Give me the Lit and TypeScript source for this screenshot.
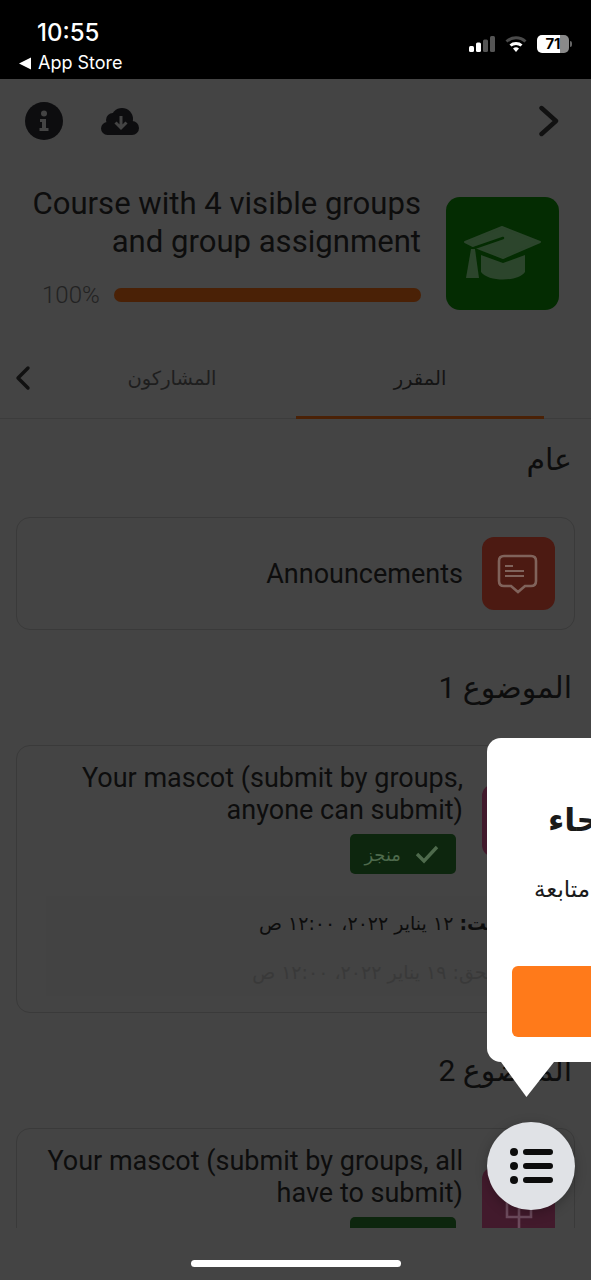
import { LitElement, html, css, svg } from 'lit';
import { customElement } from 'lit/decorators.js';

const capIcon = svg`<path d="M56 30 L94 45 L57 61 L34 52 L27 49 L19 45 Z" fill="#2c452c" stroke="#2c452c" stroke-width="2" stroke-linejoin="round"/>
  <path d="M57 41 L28 51" stroke="#042c02" stroke-width="2.4" stroke-linecap="round"/>
  <path d="M35 58 L57 66 L79 58 L79 75 C72 85 42 85 35 75 Z" fill="#2c452c"/>
  <path d="M25 52 L29 52 L33 81 L20 81 Z" fill="#2c452c"/>`;

const bubbleIcon = svg`<path d="M22 19 H49 Q54 19 54 24 V44 Q54 49 49 49 H43 L36 55 L29 49 H22 Q17 49 17 44 V24 Q17 19 22 19 Z" fill="none" stroke="#80635b" stroke-width="2.6"/>
  <path d="M23 29 H31 M23 34 H42 M23 39 H42" stroke="#80635b" stroke-width="2.2"/>`;

const plusIcon = svg`<path d="M25 30 H49 V50 H25 Z M37 24 V62" fill="none" stroke="#6c4a5c" stroke-width="2.6"/>`;

@customElement('app-root')
export class AppRoot extends LitElement {
  static styles = css`
    :host {
      display: block;
      position: relative;
      width: 591px;
      height: 1280px;
      overflow: hidden;
      background: #444444;
      font-family: Roboto, "DejaVu Sans", sans-serif;
      color: #0d0d0d;
    }

    /* status bar */
    .status {
      height: 79px;
      box-sizing: border-box;
      background: #000;
      color: #fff;
      display: flex;
      justify-content: space-between;
      padding: 19px 19px 0 19px;
    }
    .status-left {
      display: flex;
      flex-direction: column;
    }
    .time {
      font: 500 24px/28px Inter, sans-serif;
      margin-left: 18px;
    }
    .back {
      display: flex;
      align-items: center;
      gap: 6px;
      font: 400 18px/24px Inter, sans-serif;
      margin-top: 4px;
    }
    .status-right {
      display: flex;
      align-items: center;
      gap: 10px;
      height: 49px;
    }
    .battery {
      position: relative;
      width: 32px;
      height: 18px;
      border-radius: 5px;
      background: linear-gradient(90deg, #fff 0 72%, #8a8a8a 72%);
      color: #000;
      font: 700 15px/18px Inter, sans-serif;
      text-align: center;
      margin-right: 3px;
    }
    .battery::after {
      content: '';
      position: absolute;
      left: 33px;
      top: 6px;
      width: 2px;
      height: 6px;
      border-radius: 0 2px 2px 0;
      background: #666;
    }

    /* page */
    .page {
      direction: rtl;
    }
    .header {
      height: 86px;
      box-sizing: border-box;
      display: flex;
      align-items: center;
      justify-content: space-between;
      padding: 0 32px 2px 25px;
    }
    .header-actions {
      display: flex;
      align-items: center;
      gap: 38px;
      direction: ltr;
    }
    .info {
      width: 38px;
      height: 38px;
      border-radius: 50%;
      background: #0d0d0f;
    }
    .course {
      display: flex;
      gap: 25px;
      margin-top: 32px;
      padding: 0 32px 0 25px;
    }
    .course-icon {
      flex: none;
      width: 113px;
      height: 113px;
      border-radius: 14px;
      background: #042c02;
    }
    .course-main {
      flex: 1;
      margin-top: -12px;
    }
    .course-title {
      direction: ltr;
      text-align: right;
      font-size: 31.1px;
      line-height: 38px;
    }
    .progress {
      display: flex;
      align-items: center;
      gap: 14px;
      margin-top: 21px;
      padding-left: 17px;
    }
    .bar {
      flex: 1;
      height: 14px;
      border-radius: 7px;
      background: #4a2106;
    }
    .percent {
      font-size: 24px;
      line-height: 26px;
      color: #222;
      font-weight: 300;
    }

    /* tabs */
    .tabs {
      display: flex;
      align-items: stretch;
      height: 68px;
      margin-top: 41px;
      padding-right: 47px;
      border-bottom: 1px solid #3c3c3c;
      box-sizing: border-box;
    }
    .tab {
      flex: none;
      width: 248px;
      box-sizing: border-box;
      padding-top: 13px;
      text-align: center;
      font-size: 19.5px;
      line-height: 30px;
      color: #141414;
    }
    .tab.active {
      border-bottom: 3px solid #4a2106;
      margin-bottom: -1px;
    }
    .tab.other {
      color: #1e1e1e;
    }
    .tab-prev {
      margin-right: auto;
      padding: 14px 0 0 15px;
    }

    /* sections */
    .content {
      height: 809px;
      overflow: hidden;
      padding: 0 16px;
    }
    h2 {
      margin: 0;
      padding: 19px 3px 0 0;
      height: 98px;
      box-sizing: border-box;
      font-size: 30px;
      line-height: 44px;
      font-weight: 400;
    }
    .card {
      box-sizing: border-box;
      width: 559px;
      margin-bottom: 17px;
      padding: 16px 19px 16px 16px;
      border: 1px solid #3a3a3a;
      border-radius: 14px;
    }
    .card-top {
      display: flex;
      gap: 19px;
    }
    .card.plain {
      height: 113px;
      display: flex;
      align-items: center;
      padding-top: 0;
      padding-bottom: 0;
    }
    .card.plain .card-top {
      flex: 1;
      align-items: center;
    }
    .tile {
      flex: none;
      width: 73px;
      height: 73px;
      border-radius: 12px;
    }
    .card.full .tile {
      margin-top: 22px;
    }
    .tile.red {
      background: #4c1a12;
    }
    .tile.pink {
      background: #421a2c;
    }
    .card-main {
      flex: 1;
      min-width: 0;
    }
    .card-title {
      direction: ltr;
      text-align: right;
      font-size: 27px;
      line-height: 32px;
    }
    .done {
      display: flex;
      align-items: center;
      gap: 14px;
      box-sizing: border-box;
      width: 106px;
      height: 40px;
      margin: 8px 7px 0 0;
      padding-right: 17px;
      border-radius: 5px;
      background: #0d260e;
      color: #4e6a4c;
      font-size: 18px;
    }
    .dates {
      margin: 22px 0 0 13px;
      height: 100px;
      padding: 12px 34px 0 0;
      box-sizing: border-box;
      background: #434343;
      font: 400 19px/30px "DejaVu Sans", sans-serif;
      white-space: nowrap;
      overflow: hidden;
    }
    .dates b {
      font-weight: 700;
    }
    .dates .due {
      margin-top: 19px;
      padding-right: 6px;
      opacity: 0.18;
    }

    /* bottom */
    .home {
      position: absolute;
      left: 191px;
      top: 1260px;
      width: 210px;
      height: 7px;
      border-radius: 4px;
      background: #fff;
    }
    .fab {
      position: absolute;
      left: 487px;
      top: 1122px;
      width: 88px;
      height: 88px;
      border-radius: 50%;
      background: #e0e2e6;
      box-shadow: 0 3px 12px rgba(0, 0, 0, 0.25);
    }
    .pop {
      position: absolute;
      left: 487px;
      top: 738px;
      width: 260px;
      height: 324px;
      box-sizing: border-box;
      background: #fff;
      border-radius: 14px;
      padding-top: 58px;
      direction: rtl;
      color: #1a1a1a;
      font-family: "DejaVu Sans", sans-serif;
    }
    .pop-title {
      margin-left: 61px;
      text-align: left;
      font-size: 32px;
      line-height: 48px;
      font-weight: 700;
      white-space: nowrap;
    }
    .pop-text {
      margin: 30px 0 0 47px;
      text-align: left;
      font-size: 23px;
      line-height: 30px;
      white-space: nowrap;
    }
    .pop-btn {
      margin: 62px 0 0 25px;
      height: 71px;
      border-radius: 6px;
      background: #ff7a1a;
    }
    .pop-arrow {
      position: absolute;
      left: 501px;
      top: 1062px;
      width: 53px;
      height: 35px;
      background: #fff;
      clip-path: polygon(0 0, 100% 0, 48% 100%);
    }
    svg {
      display: block;
    }
  `;

  private card(title: string, extra = true) {
    return html`<div class="card full">
      <div class="card-top">
        <div class="tile pink">
          <svg width="73" height="73" viewBox="0 0 73 73">${plusIcon}</svg>
        </div>
        <div class="card-main">
          <div class="card-title">${title}</div>
          <div class="done">
            <svg width="24" height="20" viewBox="0 0 24 20"><path d="M2 10 L9 17 L22 3" fill="none" stroke="#4e6a4c" stroke-width="3.4"/></svg>
            <span>منجز</span>
          </div>
        </div>
      </div>
      ${extra
        ? html`<div class="dates">
            <div><b>فُتحت:</b> ١٢ يناير ٢٠٢٢، ١٢:٠٠ ص</div>
            <div class="due">يستحق: ١٩ يناير ٢٠٢٢، ١٢:٠٠ ص</div>
          </div>`
        : ''}
    </div>`;
  }

  render() {
    return html`
      <div class="status">
        <div class="status-left">
          <div class="time">10:55</div>
          <div class="back">
            <svg width="13" height="13" viewBox="0 0 13 13"><path d="M0 6.5 L12 0.5 V12.5 Z" fill="#fff"/></svg>
            <span>App Store</span>
          </div>
        </div>
        <div class="status-right">
          <svg width="26" height="16" viewBox="0 0 26 16">
            <rect x="0" y="10" width="5" height="6" rx="1.5" fill="#fff"/>
            <rect x="7" y="6.5" width="5" height="9.5" rx="1.5" fill="#fff"/>
            <rect x="14" y="3.5" width="5" height="12.5" rx="1.5" fill="#555"/>
            <rect x="21" y="0" width="5" height="16" rx="1.5" fill="#555"/>
          </svg>
          <svg width="22" height="18" viewBox="0 0 22 18">
            <path d="M1.5 6.5 C7 1.5 15 1.5 20.5 6.5" fill="none" stroke="#4a4a4a" stroke-width="3"/>
            <path d="M5.5 10.5 C8.5 7.8 13.5 7.8 16.5 10.5" fill="none" stroke="#fff" stroke-width="3"/>
            <path d="M8 13.5 Q11 11 14 13.5 L11 17 Z" fill="#fff"/>
          </svg>
          <div class="battery">71</div>
        </div>
      </div>

      <div class="page">
        <div class="header">
          <svg width="20" height="32" viewBox="0 0 20 32"><path d="M2.5 3 L17 16 L2.5 29" fill="none" stroke="#111" stroke-width="4.4" stroke-linecap="round" stroke-linejoin="round"/></svg>
          <div class="header-actions">
            <div class="info">
              <svg width="38" height="38" viewBox="0 0 38 38">
                <circle cx="19" cy="11.5" r="3" fill="#444"/>
                <path d="M15 17 H21 V26 H23.5 V29 H14.5 V26 H17 V20 H15 Z" fill="#444"/>
              </svg>
            </div>
            <svg width="38" height="27" viewBox="0 0 38 27">
              <g fill="#0d0d0f">
                <circle cx="21" cy="11" r="11"/>
                <circle cx="12" cy="12" r="7"/>
                <circle cx="6.5" cy="20.5" r="6.5"/>
                <circle cx="31" cy="20" r="7"/>
                <rect x="6" y="14" width="25" height="13"/>
              </g>
              <path d="M20 8 V19 M14.5 14.5 L20 20 L25.5 14.5" fill="none" stroke="#444" stroke-width="3"/>
            </svg>
          </div>
        </div>

        <div class="course">
          <div class="course-icon">
            <svg width="113" height="113" viewBox="0 0 113 113">${capIcon}</svg>
          </div>
          <div class="course-main">
            <div class="course-title">Course with 4 visible groups and group assignment</div>
            <div class="progress">
              <div class="bar"></div>
              <div class="percent">100%</div>
            </div>
          </div>
        </div>

        <div class="tabs">
          <div class="tab active">المقرر</div>
          <div class="tab other">المشاركون</div>
          <div class="tab-prev">
            <svg width="16" height="26" viewBox="0 0 16 26"><path d="M13 3 L3 13 L13 23" fill="none" stroke="#111" stroke-width="3.4" stroke-linecap="round" stroke-linejoin="round"/></svg>
          </div>
        </div>

        <div class="content">
          <h2>عام</h2>
          <div class="card plain">
            <div class="card-top">
              <div class="tile red">
                <svg width="73" height="73" viewBox="0 0 73 73">${bubbleIcon}</svg>
              </div>
              <div class="card-main"><div class="card-title">Announcements</div></div>
            </div>
          </div>
          <h2>الموضوع 1</h2>
          ${this.card('Your mascot (submit by groups, anyone can submit)')}
          <h2>الموضوع 2</h2>
          ${this.card('Your mascot (submit by groups, all have to submit)', false)}
        </div>
      </div>

      <div class="pop">
        <div class="pop-title">أنحاء</div>
        <div class="pop-text">متابعة</div>
        <div class="pop-btn"></div>
      </div>
      <div class="pop-arrow"></div>
      <div class="fab">
        <svg width="88" height="88" viewBox="0 0 88 88">
          <path d="M39 30 H63 M39 44 H63 M39 58 H63" stroke="#0c0c0c" stroke-width="6" stroke-linecap="round"/>
          <circle cx="27" cy="30" r="4" fill="#0c0c0c"/>
          <circle cx="27" cy="44" r="4" fill="#0c0c0c"/>
          <circle cx="27" cy="58" r="4" fill="#0c0c0c"/>
        </svg>
      </div>
      <div class="home"></div>
    `;
  }
}
